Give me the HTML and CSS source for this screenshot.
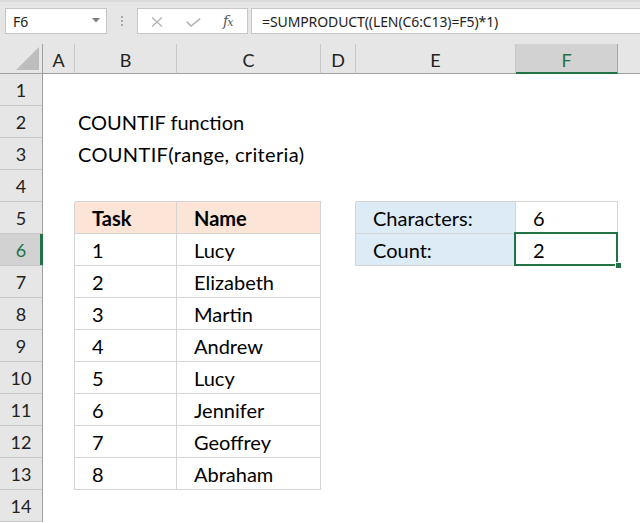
FILE: index.html
```html
<!DOCTYPE html>
<html>
<head>
<meta charset="utf-8">
<link rel="stylesheet" href="styles.css">
</head>
<body>
<div class="app">
  <div class="toolbar">
    <div class="namebox">
      <span class="nb-text">F6</span>
      <svg class="caret" width="8" height="5" viewBox="0 0 8 5"><path d="M0 0H8L4 4.5Z" fill="#7f7f7f"/></svg>
    </div>
    <div class="grip"><i></i><i></i><i></i></div>
    <div class="fxbox">
      <svg class="ico-x" width="12" height="10" viewBox="0 0 12 10"><path d="M1 0.5L11 9.5M11 0.5L1 9.5" stroke="#b4b4b4" stroke-width="1.3" fill="none"/></svg>
      <svg class="ico-ok" width="15" height="9" viewBox="0 0 15 9"><path d="M0.8 3.6L5 8L14.2 0.6" stroke="#b4b4b4" stroke-width="1.6" fill="none"/></svg>
      <span class="fx">f<sub>x</sub></span>
    </div>
    <div class="formula">=SUMPRODUCT((LEN(C6:C13)=F5)*1)</div>
  </div>

  <div class="sheet">
    <div class="corner"><svg width="23" height="23" viewBox="0 0 23 23"><path d="M0 23H23V0Z" fill="#bdbdbd"/></svg></div>
    <div class="ch">A</div>
    <div class="ch">B</div>
    <div class="ch">C</div>
    <div class="ch">D</div>
    <div class="ch">E</div>
    <div class="ch sel">F</div>
    <div class="ch last"></div>

    <div class="rh">1</div><div class="c"></div><div class="c"></div><div class="c"></div><div class="c"></div><div class="c"></div><div class="c"></div><div class="c"></div>
    <div class="rh">2</div><div class="c"></div><div class="c pad">COUNTIF function</div><div class="c"></div><div class="c"></div><div class="c"></div><div class="c"></div><div class="c"></div>
    <div class="rh">3</div><div class="c"></div><div class="c pad wide">COUNTIF(range, criteria)</div><div class="c"></div><div class="c"></div><div class="c"></div><div class="c"></div><div class="c"></div>
    <div class="rh">4</div><div class="c"></div><div class="c bb"></div><div class="c bb"></div><div class="c"></div><div class="c bb"></div><div class="c bb"></div><div class="c"></div>
    <div class="rh">5</div><div class="c br"></div><div class="c t head">Task</div><div class="c t head">Name</div><div class="c br"></div><div class="c t blue">Characters:</div><div class="c t">6</div><div class="c"></div>
    <div class="rh sel">6</div><div class="c br"></div><div class="c t">1</div><div class="c t">Lucy</div><div class="c br"></div><div class="c t blue">Count:</div><div class="c t active">2</div><div class="c"></div>
    <div class="rh">7</div><div class="c br"></div><div class="c t">2</div><div class="c t">Elizabeth</div><div class="c"></div><div class="c"></div><div class="c"></div><div class="c"></div>
    <div class="rh">8</div><div class="c br"></div><div class="c t">3</div><div class="c t">Martin</div><div class="c"></div><div class="c"></div><div class="c"></div><div class="c"></div>
    <div class="rh">9</div><div class="c br"></div><div class="c t">4</div><div class="c t">Andrew</div><div class="c"></div><div class="c"></div><div class="c"></div><div class="c"></div>
    <div class="rh">10</div><div class="c br"></div><div class="c t">5</div><div class="c t">Lucy</div><div class="c"></div><div class="c"></div><div class="c"></div><div class="c"></div>
    <div class="rh">11</div><div class="c br"></div><div class="c t">6</div><div class="c t">Jennifer</div><div class="c"></div><div class="c"></div><div class="c"></div><div class="c"></div>
    <div class="rh">12</div><div class="c br"></div><div class="c t">7</div><div class="c t">Geoffrey</div><div class="c"></div><div class="c"></div><div class="c"></div><div class="c"></div>
    <div class="rh">13</div><div class="c br"></div><div class="c t">8</div><div class="c t">Abraham</div><div class="c"></div><div class="c"></div><div class="c"></div><div class="c"></div>
    <div class="rh">14</div><div class="c"></div><div class="c"></div><div class="c"></div><div class="c"></div><div class="c"></div><div class="c"></div><div class="c"></div>
  </div>
</div>
</body>
</html>
```

FILE: styles.css
```css
* { box-sizing: border-box; }
html, body { margin: 0; padding: 0; }
body { background: #ffffff; overflow: hidden; }

.app { width: 640px; height: 523px; background: #ffffff; overflow: hidden; }

/* ---------- formula bar ---------- */
.toolbar {
  height: 44px;
  background: #e6e6e6;
  border-top: 2px solid #dadada;
  display: flex;
  align-items: flex-start;
  padding-top: 6px;
  font-family: "Noto Sans", "Open Sans", sans-serif;
  font-size: 14px;
  color: #222;
}
.namebox {
  margin-left: 5px;
  width: 102px;
  height: 26px;
  background: #fff;
  border: 1px solid #c6c6c6;
  display: flex;
  align-items: center;
  padding-left: 7px;
  padding-right: 6px;
}
.nb-text { flex: 1; }
.caret { display: block; margin-top: -1px; }

.grip {
  width: 30px;
  height: 26px;
  display: flex;
  flex-direction: column;
  align-items: center;
  justify-content: center;
  gap: 2px;
}
.grip i { display: block; width: 2px; height: 2px; background: #a8a8a8; }

.fxbox {
  width: 111px;
  height: 26px;
  background: #fff;
  border: 1px solid #c6c6c6;
  display: flex;
  align-items: center;
  padding-left: 13px;
}
.ico-x { display: block; margin-top: 1px; }
.ico-ok { display: block; margin-left: 23px; margin-top: 3px; }
.fx {
  margin-left: 22px;
  font-family: "DejaVu Serif", "Liberation Serif", serif;
  font-style: italic;
  font-size: 14px;
  color: #555;
  line-height: 1;
}
.fx sub { font-size: 11px; vertical-align: baseline; position: relative; top: 0; margin-left: -1px; }

.formula {
  margin-left: 3px;
  flex: 1;
  margin-right: -10px;
  height: 26px;
  background: #fff;
  border: 1px solid #c6c6c6;
  padding-left: 10px;
  display: flex;
  align-items: center;
  white-space: nowrap;
  letter-spacing: -0.1px;
}

/* ---------- sheet ---------- */
.sheet {
  display: grid;
  grid-template-columns: 43px 32px 102px 144px 35px 160px 102px 22px;
  grid-template-rows: 30px repeat(14, 32px);
  background: #ffffff;
  font-family: Lato, "Liberation Sans", sans-serif;
  font-size: 20px;
  color: #000;
}

.corner {
  background: #e6e6e6;
  border-right: 1px solid #9f9f9f;
  border-bottom: 1px solid #9f9f9f;
  display: flex;
  align-items: flex-end;
  justify-content: flex-end;
  padding: 0 3px 3px 0;
}
.corner svg { display: block; }

.ch {
  background: #e6e6e6;
  border-right: 1px solid #c8c8c8;
  border-bottom: 1px solid #9f9f9f;
  display: flex;
  align-items: center;
  justify-content: center;
  font-size: 18px;
  color: #222;
  padding-top: 2px;
}
.ch.last { border-right: none; }
.ch.sel {
  background: #d2d2d2;
  color: #217346;
  border-right-color: #a8a8a8;
  border-bottom: 2px solid #217346;
  padding-top: 3px;
}

.rh {
  background: #e6e6e6;
  border-right: 1px solid #9f9f9f;
  border-bottom: 1px solid #c8c8c8;
  display: flex;
  align-items: center;
  justify-content: center;
  font-size: 18px;
  color: #222;
}
.rh.sel {
  background: #d2d2d2;
  color: #217346;
  border-right-color: #217346;
  box-shadow: inset -2px 0 0 #217346;
}

.c {
  display: flex;
  align-items: center;
  white-space: nowrap;
  overflow: visible;
}
.pad { padding-left: 3px; }
.wide { letter-spacing: 0.35px; }

.bb { border-bottom: 1px solid #d4d4d4; }
.br { border-right: 1px solid #d4d4d4; }
.t {
  border-right: 1px solid #d4d4d4;
  border-bottom: 1px solid #d4d4d4;
  padding-left: 17px;
  background: #fff;
}
.t.head { background: #fce4d6; font-weight: bold; }
.t.blue { background: #ddebf7; }

.active { position: relative; }
.active::after {
  content: "";
  position: absolute;
  left: -2px;
  top: -2px;
  right: -1px;
  bottom: -1px;
  border: 2px solid #217346;
}
.active::before {
  content: "";
  position: absolute;
  right: -4px;
  bottom: -3px;
  width: 5px;
  height: 5px;
  background: #217346;
  box-shadow: 0 0 0 1px #fff;
  z-index: 2;
}
```
